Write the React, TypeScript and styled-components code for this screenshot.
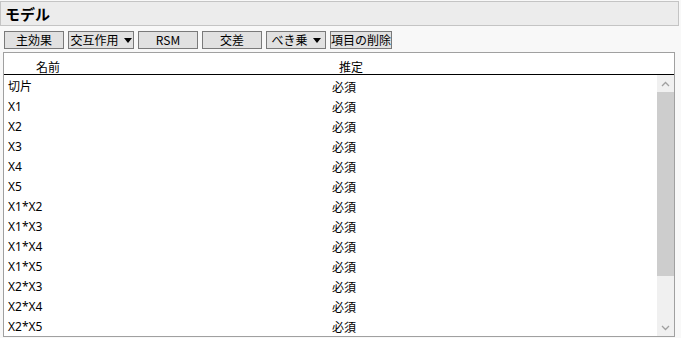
import styled, { createGlobalStyle } from "styled-components"

const GlobalStyle = createGlobalStyle`
    body {
        margin: 0;
        background: #f8f8f8;
        font-family: "Noto Sans", "Noto Sans CJK JP", sans-serif;
        color: #000;
    }
`

const Page = styled.div`
    width: 681px;
    height: 338px;
    padding: 1px 2px 0 0;
    box-sizing: border-box;
    overflow: hidden;
`

const TitleBar = styled.div`
    height: 25px;
    box-sizing: border-box;
    border: 1px solid #c4c4c4;
    background: #ececec;
    display: flex;
    align-items: center;
    padding-left: 4px;
    font-family: "Noto Sans CJK JP", sans-serif;
    font-weight: bold;
    font-size: 15px;
`

const Toolbar = styled.div`
    display: flex;
    gap: 4px;
    margin-top: 5px;
    padding-left: 4px;
`

const ToolButton = styled.div<{ $w: number }>`
    width: ${p => p.$w}px;
    height: 18px;
    box-sizing: border-box;
    border: 1px solid #7a7a7a;
    background: #e1e1e1;
    display: flex;
    align-items: center;
    justify-content: center;
    gap: 5px;
    font-family: "Noto Sans CJK JP", sans-serif;
    font-size: 12px;
    line-height: 1;
`

const Caret = styled.span`
    width: 0;
    height: 0;
    border-left: 4px solid transparent;
    border-right: 4px solid transparent;
    border-top: 5px solid #000;
    margin-top: 1px;
`

const ListBox = styled.div`
    margin: 3px 0 0 3px;
    width: 672px;
    height: 285px;
    box-sizing: border-box;
    border: 1px solid #a0a0a0;
    background: #fff;
    display: flex;
    flex-direction: column;
`

const HeaderRow = styled.div`
    height: 22px;
    box-sizing: border-box;
    border-bottom: 1px solid #000;
    display: grid;
    grid-template-columns: 303px 1fr;
    align-items: center;
    padding: 5px 0 0 32px;
    font-family: "Noto Sans CJK JP", sans-serif;
    font-size: 12px;
`

const Body = styled.div`
    flex: 1;
    display: flex;
    overflow: hidden;
`

const Rows = styled.div`
    flex: 1;
    padding-top: 1px;
`

const Row = styled.div`
    height: 20px;
    display: grid;
    grid-template-columns: 324px 1fr;
    align-items: center;
    padding-left: 4px;
    font-size: 12px;
`

const Value = styled.span`
    font-family: "Noto Sans CJK JP", sans-serif;
`

const Scrollbar = styled.div`
    width: 17px;
    background: #f0f0f0;
    display: flex;
    flex-direction: column;
`

const Arrow = styled.div`
    height: 17px;
    display: flex;
    align-items: center;
    justify-content: center;
`

const Thumb = styled.div`
    height: 184px;
    background: #cdcdcd;
`

const Spacer = styled.div`
    flex: 1;
`

const names = ["切片", "X1", "X2", "X3", "X4", "X5", "X1*X2", "X1*X3", "X1*X4", "X1*X5", "X2*X3", "X2*X4", "X2*X5"]

const Chevron = ({ up }: { up?: boolean }) => (
    <svg width="9" height="6" viewBox="0 0 9 6">
        <path d={up ? "M1 5 L4.5 1.5 L8 5" : "M1 1 L4.5 4.5 L8 1"} fill="none" stroke="#a0a0a0" strokeWidth="1.3" />
    </svg>
)

export default function App() {
    return (
        <Page>
            <GlobalStyle />
            <TitleBar>モデル</TitleBar>
            <Toolbar>
                <ToolButton $w={60}>主効果</ToolButton>
                <ToolButton $w={66}>交互作用<Caret /></ToolButton>
                <ToolButton $w={60}>RSM</ToolButton>
                <ToolButton $w={60}>交差</ToolButton>
                <ToolButton $w={60}>べき乗<Caret /></ToolButton>
                <ToolButton $w={62}>項目の削除</ToolButton>
            </Toolbar>
            <ListBox>
                <HeaderRow>
                    <span>名前</span>
                    <span>推定</span>
                </HeaderRow>
                <Body>
                    <Rows>
                        {names.map(n => (
                            <Row key={n}>
                                <span>{n}</span>
                                <Value>必須</Value>
                            </Row>
                        ))}
                    </Rows>
                    <Scrollbar>
                        <Arrow><Chevron up /></Arrow>
                        <Thumb />
                        <Spacer />
                        <Arrow><Chevron /></Arrow>
                    </Scrollbar>
                </Body>
            </ListBox>
        </Page>
    )
}
